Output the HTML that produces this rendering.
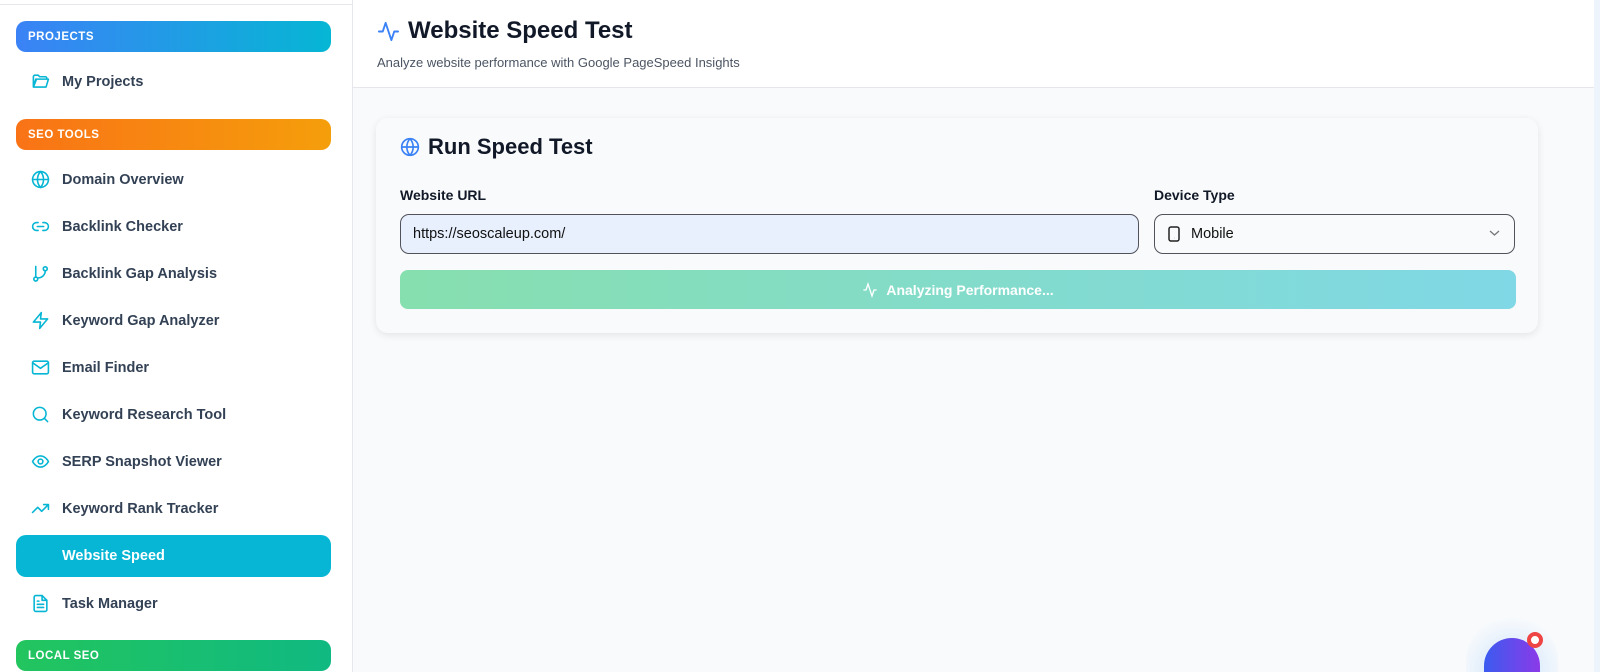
<!DOCTYPE html>
<html style="width:1600px;height:672px;overflow:hidden;background:#f8fafc"><head><style>
*{box-sizing:border-box;margin:0;padding:0}
body{width:1600px;height:672px;overflow:hidden;font-family:"Liberation Sans",sans-serif;background:#f8fafc;position:relative}
.sb{position:absolute;left:0;top:0;width:353px;height:672px;background:#fff;border-right:1px solid #e5e7eb;overflow:hidden}
.sb .topline{position:absolute;left:0;top:4px;width:352px;height:1px;background:#e5e7eb}
.hdr{position:absolute;left:16px;width:315px;height:31px;border-radius:10px;color:#fff;font-weight:bold;font-size:11.5px;letter-spacing:.5px;padding:10px 12px}
.item{position:absolute;left:16px;width:315px;height:42px;font-weight:bold;font-size:14.5px;color:#334155}
.item svg{position:absolute;left:15px;top:11px;width:19px;height:19px;fill:none;stroke:#06b6d4;stroke-width:2;stroke-linecap:round;stroke-linejoin:round}
.item span{position:absolute;left:46px;top:13px}
.act{background:#06b6d4;border-radius:10px;color:#fff}
.top{position:absolute;left:353px;top:0;width:1241px;height:88px;background:#fff;border-bottom:1px solid #e5e7eb}
.card{position:absolute;left:376px;top:118px;width:1162px;height:215px;background:#f9fafb;border-radius:12px;box-shadow:0 2px 8px rgba(0,0,0,.09)}
.lbl{position:absolute;font-size:14px;font-weight:bold;color:#111827}
.inp{position:absolute;top:96px;height:40px;border:1px solid #52525b;border-radius:9px;font-size:14.5px;color:#111;padding:11px 12px}
.btn{position:absolute;left:24px;top:152px;width:1116px;height:39px;border-radius:8px;background:linear-gradient(90deg,#86dfae,#80d8e6);color:#fff;font-size:14px;font-weight:bold;display:flex;align-items:center;justify-content:center}
.scroll{position:absolute;left:1594px;top:0;width:6px;height:672px;background:#eef4fc}
</style></head><body>
<div class="sb"><div class="topline"></div>
<div class="hdr" style="top:21px;background:linear-gradient(90deg,#3b82f6,#06b6d4)">PROJECTS</div>
<div class="item" style="top:61px"><svg viewBox="0 0 24 24"><path d="M3 6a2 2 0 0 1 2-2h4l2 2h7a2 2 0 0 1 2 2v1H7l-4 10z M3 19l3-10h16l-3 10z"/></svg><span>My Projects</span></div>
<div class="hdr" style="top:119px;background:linear-gradient(90deg,#f97316,#f59e0b)">SEO TOOLS</div>
<div class="item" style="top:159px"><svg viewBox="0 0 24 24"><circle cx="12" cy="12" r="10"/><path d="M2 12h20M12 2a15 15 0 0 1 0 20M12 2a15 15 0 0 0 0 20"/></svg><span>Domain Overview</span></div>
<div class="item" style="top:206px"><svg viewBox="0 0 24 24"><path d="M9 17H7a5 5 0 0 1 0-10h2M15 7h2a5 5 0 0 1 0 10h-2M8 12h8"/></svg><span>Backlink Checker</span></div>
<div class="item" style="top:253px"><svg viewBox="0 0 24 24"><circle cx="6" cy="19" r="2.5"/><circle cx="18" cy="6" r="2.5"/><path d="M6 3v13.5M18 8.5a9 9 0 0 1-9 9"/></svg><span>Backlink Gap Analysis</span></div>
<div class="item" style="top:300px"><svg viewBox="0 0 24 24"><path d="M13 2 3 14h9l-1 8 10-12h-9z"/></svg><span>Keyword Gap Analyzer</span></div>
<div class="item" style="top:347px"><svg viewBox="0 0 24 24"><rect x="2" y="4" width="20" height="16" rx="2"/><path d="m2 6 10 7 10-7"/></svg><span>Email Finder</span></div>
<div class="item" style="top:394px"><svg viewBox="0 0 24 24"><circle cx="11" cy="11" r="8"/><path d="m21 21-4.3-4.3"/></svg><span>Keyword Research Tool</span></div>
<div class="item" style="top:441px"><svg viewBox="0 0 24 24"><path d="M2 12s3.5-7 10-7 10 7 10 7-3.5 7-10 7S2 12 2 12z"/><circle cx="12" cy="12" r="3"/></svg><span>SERP Snapshot Viewer</span></div>
<div class="item" style="top:488px"><svg viewBox="0 0 24 24"><path d="m22 7-8.5 8.5-5-5L2 17M16 7h6v6"/></svg><span>Keyword Rank Tracker</span></div>
<div class="item act" style="top:535px"><span style="color:#fff">Website Speed</span></div>
<div class="item" style="top:583px"><svg viewBox="0 0 24 24"><path d="M14 2H6a2 2 0 0 0-2 2v16a2 2 0 0 0 2 2h12a2 2 0 0 0 2-2V8z"/><path d="M14 2v6h6M16 13H8M16 17H8M10 9H8"/></svg><span>Task Manager</span></div>
<div class="hdr" style="top:640px;background:linear-gradient(90deg,#22c55e,#10b981)">LOCAL SEO</div>
</div>
<div class="top">
<svg style="position:absolute;left:24px;top:20px" width="23" height="23" viewBox="0 0 24 24" fill="none" stroke="#3b82f6" stroke-width="2" stroke-linecap="round" stroke-linejoin="round"><path d="M22 12h-4l-3 9L9 3l-3 9H2"/></svg>
<div style="position:absolute;left:55px;top:17px;font-size:24px;font-weight:bold;color:#111827">Website Speed Test</div>
<div style="position:absolute;left:24px;top:55px;font-size:13px;color:#4b5563">Analyze website performance with Google PageSpeed Insights</div>
</div>
<div class="card">
<svg style="position:absolute;left:24px;top:19px" width="20" height="20" viewBox="0 0 24 24" fill="none" stroke="#3b82f6" stroke-width="2"><circle cx="12" cy="12" r="10"/><path d="M2 12h20M12 2a15 15 0 0 1 0 20M12 2a15 15 0 0 0 0 20"/></svg>
<div style="position:absolute;left:52px;top:16px;font-size:22px;font-weight:bold;color:#111827">Run Speed Test</div>
<div class="lbl" style="left:24px;top:69px">Website URL</div>
<div class="lbl" style="left:778px;top:69px">Device Type</div>
<div class="inp" style="left:24px;width:739px;background:#e8f0fe">https://seoscaleup.com/</div>
<div class="inp" style="left:778px;width:361px;background:#f9fafb;padding-left:36px">
<svg style="position:absolute;left:12px;top:11px" width="14" height="16" viewBox="0 0 14 16" fill="none" stroke="#222" stroke-width="1.5"><rect x="2" y="1" width="10" height="14" rx="2"/><path d="M7 12h.1"/></svg>Mobile
<svg style="position:absolute;right:14px;top:14px" width="11" height="8" viewBox="0 0 11 8" fill="none" stroke="#777" stroke-width="1.3"><path d="M1 2l4.5 4 4.5-4"/></svg></div>
<div class="btn"><svg width="16" height="16" viewBox="0 0 24 24" fill="none" stroke="#fff" stroke-width="2" style="margin-right:8px"><path d="M22 12h-4l-3 9L9 3l-3 9H2"/></svg>Analyzing Performance...</div>
</div>
<div style="position:absolute;left:1466px;top:616px;width:92px;height:56px;border-radius:46px 46px 0 0;background:radial-gradient(circle at 50% 100%,rgba(147,197,253,.45),rgba(219,234,254,0) 75%)"></div>
<div style="position:absolute;left:1484px;top:638px;width:56px;height:34px;border-radius:28px 28px 0 0/28px 28px 0 0;background:linear-gradient(90deg,#3b5bf0,#8b3ae8)"></div>
<div style="position:absolute;left:1527px;top:632px;width:16px;height:16px;border-radius:50%;border:4px solid #ef4444;background:#fff"></div>
<div class="scroll"></div>
</body></html>
